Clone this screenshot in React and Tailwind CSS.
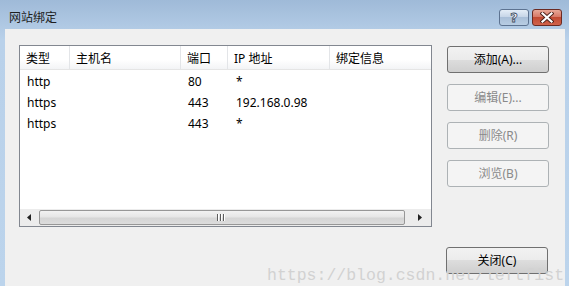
import React from "react";

const font = "font-['Noto_Sans','Noto_Sans_CJK_SC',sans-serif]";

function Btn({ children, disabled }) {
  return (
    <div
      className={
        "w-[102px] h-[27px] rounded-[3px] border flex items-center justify-center text-[12px] leading-[14px] " +
        (disabled
          ? "border-[#adb2b5] bg-[#f4f4f4] text-[#8a8a8a]"
          : "border-[#707070] bg-[linear-gradient(#f2f2f2,#ebebeb_50%,#dddddd_50%,#cfcfcf)] text-black")
      }
    >
      {children}
    </div>
  );
}

const cols = [
  { label: "类型", w: "w-[50px]" },
  { label: "主机名", w: "w-[111px]" },
  { label: "端口", w: "w-[47px]" },
  { label: "IP 地址", w: "w-[102px]" },
  { label: "绑定信息", w: "flex-1" },
];

const rows = [
  ["http", "", "80", "*", ""],
  ["https", "", "443", "192.168.0.98", ""],
  ["https", "", "443", "*", ""],
];

export default function App() {
  return (
    <div className={"relative w-[569px] h-[286px] overflow-hidden flex flex-col bg-[linear-gradient(#9fbad8,#b9d1ea_40px,#bcd4ec)] " + font}>
      {/* title bar */}
      <div className="h-[29px] flex items-start shrink-0">
        <div className="pl-[9px] pt-[9px] text-[12px] leading-[18px] text-[#1e1e1e]">网站绑定</div>
        <div className="ml-auto mr-[7px] mt-[9px] flex gap-[3px]">
          <div className="w-[30px] h-[17px] rounded-[3px] border border-[#5d7391] bg-[linear-gradient(#e4edf7,#c3d3e6_50%,#a9bfd8_50%,#b8cde3)] flex items-center justify-center">
            <span className="text-[13px] font-bold leading-none text-white font-['DejaVu_Sans',sans-serif] [-webkit-text-stroke:0.8px_#3a4a5e]">?</span>
          </div>
          <div className="w-[30px] h-[17px] rounded-[3px] border border-[#6b2a22] bg-[linear-gradient(#e8a898,#d67462_50%,#c24a33_50%,#d0624a)] flex items-center justify-center">
            <svg width="14" height="11" viewBox="0 0 14 11">
              <path d="M2.5 1.5 L11.5 9.5 M11.5 1.5 L2.5 9.5" stroke="#4a2019" strokeWidth="4" strokeLinecap="square" />
              <path d="M2.5 1.5 L11.5 9.5 M11.5 1.5 L2.5 9.5" stroke="#ffffff" strokeWidth="2.2" strokeLinecap="square" />
            </svg>
          </div>
        </div>
      </div>

      {/* content */}
      <div className="flex-1 ml-[5px] mr-[4px] bg-[#f0f0f0] flex pl-[14px] pt-[16px]">
        <div className="flex flex-col">
          {/* list box */}
          <div className="w-[413px] h-[182px] border border-[#828790] bg-white flex flex-col">
            <div className="h-[24px] flex border-b border-[#e5e5e5] bg-[linear-gradient(#ffffff,#ffffff_60%,#f3f4f6)] shrink-0">
              {cols.map((c, i) => (
                <div
                  key={i}
                  className={c.w + " h-full flex items-center pl-[6px] pt-[3px] text-[12px] text-black " + (i < 4 ? "border-r border-[#e3e5e8]" : "")}
                >
                  {c.label}
                </div>
              ))}
            </div>
            <div className="flex-1 pt-[1px]">
              {rows.map((r, ri) => (
                <div key={ri} className="h-[21px] flex items-center text-[12px] text-black">
                  {r.map((v, ci) => (
                    <div key={ci} className={cols[ci].w + " pl-[7px] " + (ci === 3 ? "pl-[8px]" : "")}>
                      {v}
                    </div>
                  ))}
                </div>
              ))}
            </div>
            {/* scrollbar */}
            <div className="h-[17px] flex items-center bg-[#ececec] shrink-0">
              <div className="w-[17px] h-full flex items-center justify-center">
                <svg width="4" height="7" viewBox="0 0 4 7"><path d="M4 0 L0 3.5 L4 7 Z" fill="#222" /></svg>
              </div>
              <div className="ml-[2px] w-[366px] h-[15px] rounded-[2px] border border-[#979797] bg-[linear-gradient(#f2f2f2,#e6e6e6_45%,#d5d5d5_55%,#dcdcdc)] flex items-center justify-center">
                <div className="flex gap-[1px] ml-[-3px]">
                  <div className="w-[2px] h-[7px] bg-[#5c5c5c] border-r border-white" />
                  <div className="w-[2px] h-[7px] bg-[#5c5c5c] border-r border-white" />
                  <div className="w-[2px] h-[7px] bg-[#5c5c5c] border-r border-white" />
                </div>
              </div>
              <div className="flex-1 h-full flex items-center justify-center pl-[4px]">
                <svg width="4" height="7" viewBox="0 0 4 7"><path d="M0 0 L4 3.5 L0 7 Z" fill="#222" /></svg>
              </div>
            </div>
          </div>
        </div>

        <div className="ml-[15px] flex flex-col">
          <div className="flex flex-col gap-[11px] pt-[1px]">
            <Btn>添加(A)...</Btn>
            <Btn disabled>编辑(E)...</Btn>
            <Btn disabled>删除(R)</Btn>
            <Btn disabled>浏览(B)</Btn>
          </div>
          <div className="mt-[60px] -ml-[1px]">
            <Btn>关闭(C)</Btn>
          </div>
        </div>
      </div>

      {/* watermark */}
      <div className="absolute left-[267px] top-[268px] text-[16.5px] leading-[16px] text-[#d2d2d2] font-['Liberation_Mono',monospace] whitespace-nowrap pointer-events-none">
        https://blog.csdn.net/leftfist
      </div>
    </div>
  );
}
